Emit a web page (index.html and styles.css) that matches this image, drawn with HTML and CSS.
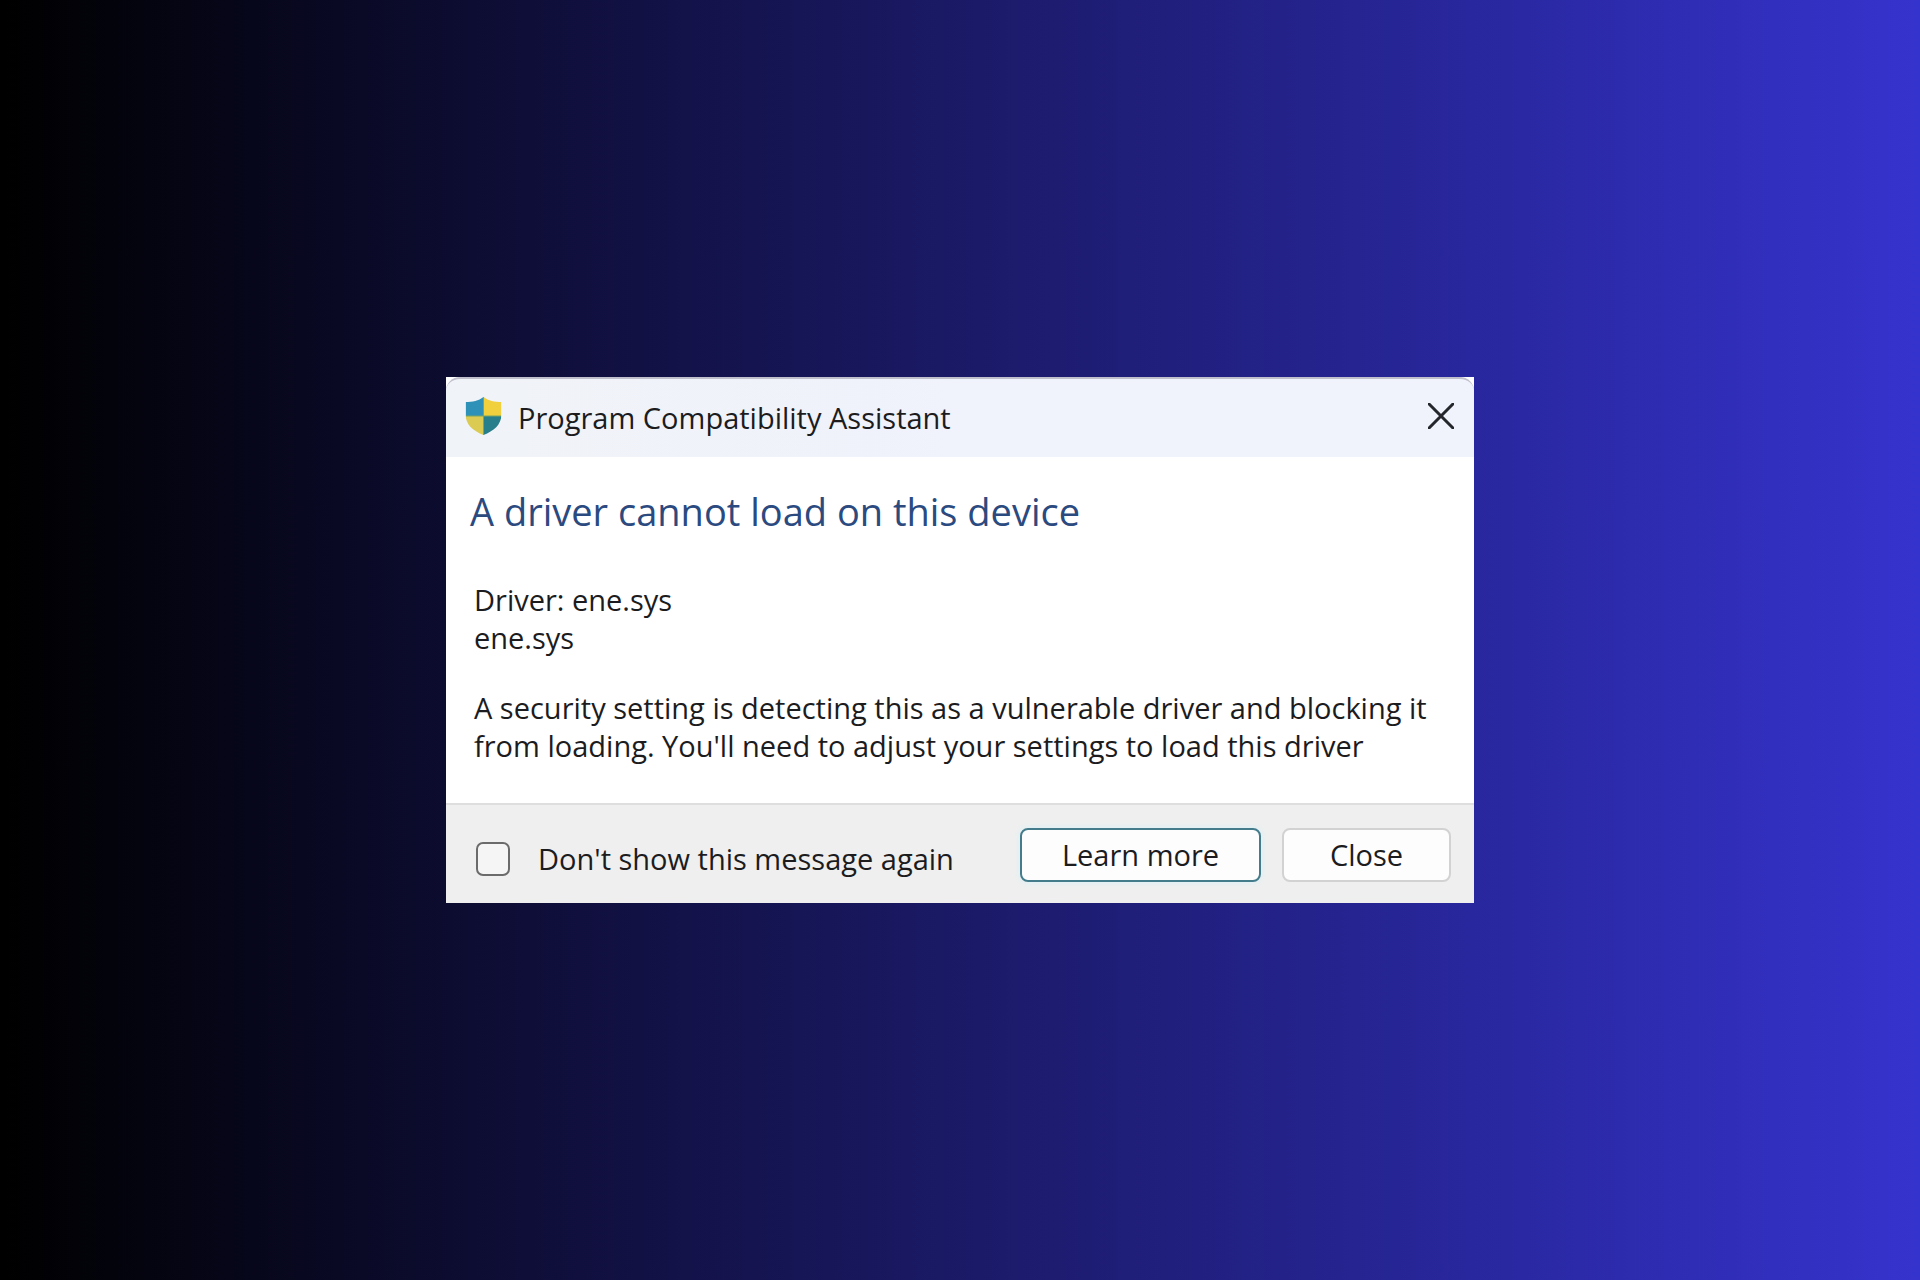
FILE: index.html
```
<!DOCTYPE html>
<html lang="en">
<head>
    <meta charset="UTF-8">
    <meta name="viewport" content="width=device-width, initial-scale=1.0">
    <title>Program Compatibility Assistant</title>
    <link rel="stylesheet" href="styles.css">
</head>
<body>
    <div class="dialog" role="dialog" aria-labelledby="dialog-title">
        <div class="title-bar">
            <!-- Security shield -->
            <svg class="shield" viewBox="0 0 36 38" aria-hidden="true">
                <defs>
                    <clipPath id="shield-shape">
                        <path d="M18 0C13 4 7 5 0 5V17C0 28 8 34 18 38C28 34 36 28 36 17V5C29 5 23 4 18 0Z"/>
                    </clipPath>
                </defs>
                <g clip-path="url(#shield-shape)">
                    <rect width="18" height="19" fill="#2d91b8"/>
                    <rect x="18" width="18" height="19" fill="#f0d03c"/>
                    <rect y="19" width="18" height="19" fill="#dccb52"/>
                    <rect x="18" y="19" width="18" height="19" fill="#287f8c"/>
                    <path d="M18 0V38M0 19H36" stroke="#79a565" stroke-width="1"/>
                </g>
            </svg>
            <span id="dialog-title" class="title">Program Compatibility Assistant</span>
            <button class="close-icon" type="button" aria-label="Close window">
                <svg viewBox="0 0 26 26" aria-hidden="true">
                    <path d="M1 1L25 25M25 1L1 25"/>
                </svg>
            </button>
        </div>
        <div class="content">
            <h1>A driver cannot load on this device</h1>
            <p>Driver: ene.sys<br>ene.sys</p>
            <p>A security setting is detecting this as a vulnerable driver and blocking it<br>from loading. You'll need to adjust your settings to load this driver</p>
        </div>
        <div class="footer">
            <div class="dont-show">
                <input type="checkbox" id="dont-show">
                <label for="dont-show">Don't show this message again</label>
            </div>
            <button class="btn btn-primary" type="button">Learn more</button>
            <button class="btn" type="button">Close</button>
        </div>
    </div>
</body>
</html>
```

FILE: styles.css
```
* {
    box-sizing: border-box;
}
body {
    margin: 0;
    min-height: 100vh;
    display: flex;
    justify-content: center;
    align-items: center;
    font-family: "Open Sans", "Noto Sans", sans-serif;
    font-size: 29px;
    line-height: 38px;
    color: #1c1c1e;
    background: linear-gradient(90deg, #000000, #3533cd);
}
.dialog {
    width: 1028px;
    max-width: 100%;
    background-color: #ffffff;
}
.title-bar {
    display: flex;
    align-items: center;
    height: 80px;
    padding: 0 20px 4px 19px;
    background: linear-gradient(90deg, #f0f3f7, #f0f2fc 50%);
    border-top: 2px solid #c0c0cc;
    border-radius: 14px 14px 0 0;
}
.shield {
    width: 37px;
    height: 38px;
    margin-right: 16px;
}
.title {
    padding-top: 4px;
}
.close-icon {
    display: flex;
    margin-left: auto;
    padding: 0;
    border: none;
    background: none;
    cursor: pointer;
}
.close-icon svg {
    width: 26px;
    height: 26px;
    fill: none;
    stroke: #25262c;
    stroke-width: 3;
    stroke-linecap: round;
}
.content {
    padding: 30px 24px 38px 28px;
}
h1 {
    margin: 0 0 46px -4px;
    font-size: 38px;
    font-weight: 400;
    line-height: 48px;
    color: #2b4a80;
}
p {
    margin: 0 0 32px;
}
p:last-child {
    margin-bottom: 0;
}
.footer {
    display: flex;
    align-items: center;
    height: 100px;
    padding: 2px 23px 0 30px;
    background-color: #efefef;
    border-top: 2px solid #dedede;
}
.dont-show {
    display: flex;
    align-items: center;
    margin-right: auto;
    padding-top: 8px;
}
input[type="checkbox"] {
    appearance: none;
    width: 34px;
    height: 34px;
    margin: 0 28px 0 0;
    border: 2px solid #6b6b6b;
    border-radius: 7px;
    background-color: #f5f5f5;
}
input[type="checkbox"]:checked {
    background-color: #3b7f92;
}
.btn {
    width: 169px;
    height: 54px;
    margin-left: 21px;
    border: 2px solid #d2d2d2;
    border-radius: 8px;
    background-color: #fdfdfd;
    font: inherit;
    color: inherit;
    cursor: pointer;
}
.btn-primary {
    width: 241px;
    border-color: #457c8b;
    box-shadow: 0 0 6px #d5f1f8;
}
```
